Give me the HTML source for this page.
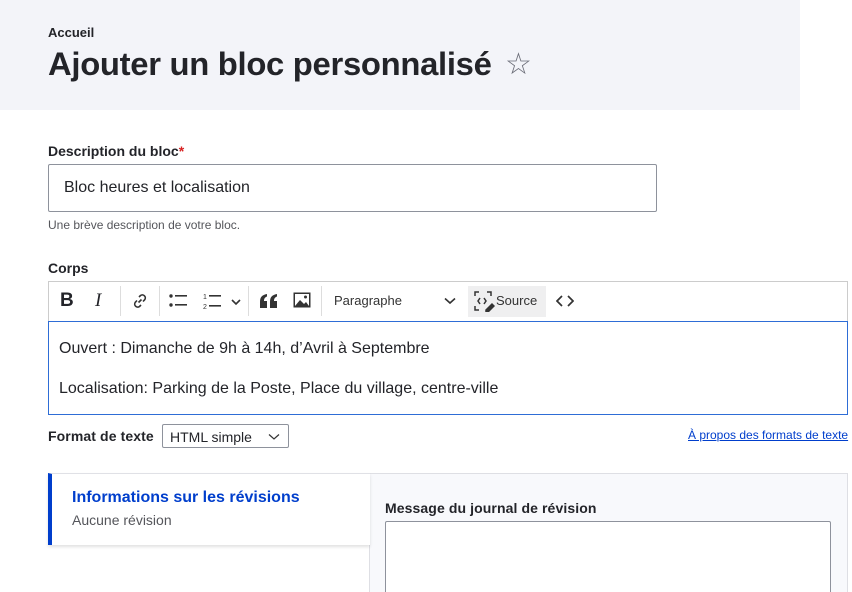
<!DOCTYPE html><html><head><meta charset="utf-8"><style>
*{box-sizing:border-box;margin:0;padding:0}
html,body{width:852px;height:592px;overflow:hidden}
body{background:#fff;font-family:"Liberation Sans",sans-serif;color:#232429;position:relative}
.a{position:absolute}
.hdr{left:0;top:0;width:800px;height:110px;background:#f3f4f9}
</style></head><body>
<div class="a hdr"></div>
<div class="a" style="left:48px;top:25px;font-size:13px;font-weight:bold">Accueil</div>
<div class="a" style="left:48px;top:45px;font-size:32.8px;font-weight:bold;letter-spacing:-0.3px">Ajouter un bloc personnalisé</div>
<div class="a" style="left:505px;top:47px;font-size:30px;color:#6b6d78">☆</div>
<div class="a" style="left:48px;top:143px;font-size:14px;font-weight:bold">Description du bloc<span style="color:#d72222">*</span></div>
<div class="a" style="left:48px;top:164px;width:609px;height:48px;border:1px solid #8e929c;border-radius:2px;padding:14px 15px;font-size:16px">Bloc heures et localisation</div>
<div class="a" style="left:48px;top:218px;font-size:12px;color:#55565b">Une brève description de votre bloc.</div>
<div class="a" style="left:48px;top:260px;font-size:14px;font-weight:bold">Corps</div>
<div class="a" style="left:48px;top:281px;width:800px;height:41px;border:1px solid #ccc;border-bottom:none;background:#fff"></div>
<div class="a" style="left:60px;top:290px;font-size:19px;font-weight:bold">B</div>
<div class="a" style="left:95px;top:290px;font-size:19px;font-style:italic;font-family:'Liberation Serif',serif">I</div>
<div class="a" style="left:120px;top:286px;width:1px;height:30px;background:#ddd"></div>
<svg class="a" style="left:131px;top:292px" width="18" height="18" viewBox="0 0 18 18" fill="none" stroke="#333" stroke-width="1.6"><path d="M7.5 10.5l3-3M8 5l1.5-1.5a3 3 0 014.2 4.2L12 9.5M10 13l-1.5 1.5a3 3 0 01-4.2-4.2L6 8.5"/></svg>
<div class="a" style="left:159px;top:286px;width:1px;height:30px;background:#ddd"></div>
<svg class="a" style="left:168px;top:292px" width="20" height="18" fill="#333"><circle cx="3" cy="4" r="1.7"/><circle cx="3" cy="13" r="1.7"/><rect x="7" y="3" width="12" height="1.6"/><rect x="7" y="12" width="12" height="1.6"/></svg>
<svg class="a" style="left:202px;top:292px" width="44" height="18" fill="#333"><text x="1" y="7" font-size="7" font-family="Liberation Sans">1</text><text x="1" y="17" font-size="7" font-family="Liberation Sans">2</text><rect x="7" y="3" width="12" height="1.6"/><rect x="7" y="13" width="12" height="1.6"/><path d="M30 8l4 4 4-4" stroke="#333" stroke-width="1.6" fill="none"/></svg>
<div class="a" style="left:248px;top:286px;width:1px;height:30px;background:#ddd"></div>
<svg class="a" style="left:260px;top:294px" width="17" height="14" fill="#333"><path d="M0 14V8C0 3 2 1 7 0v2.5C4.5 3.5 4 5 4 7h3v7zM10 14V8c0-5 2-7 7-8v2.5c-2.5 1-3 2.5-3 4.5h3v7z"/></svg>
<svg class="a" style="left:293px;top:292px" width="18" height="16"><rect x="0.5" y="0.5" width="17" height="15" fill="#333"/><rect x="2" y="2" width="14" height="12" fill="#fff"/><path d="M2 14l5-6 4 4 2-2 3 4z" fill="#333"/><circle cx="12.5" cy="5" r="1.5" fill="#333"/></svg>
<div class="a" style="left:321px;top:286px;width:1px;height:30px;background:#ddd"></div>
<div class="a" style="left:334px;top:293px;font-size:13px;color:#333">Paragraphe</div>
<svg class="a" style="left:444px;top:297px" width="12" height="8"><path d="M1 1.5l5 4.5 5-4.5" stroke="#333" stroke-width="1.6" fill="none"/></svg>
<div class="a" style="left:468px;top:286px;width:78px;height:31px;background:#efeff0"></div>
<svg class="a" style="left:473px;top:290px" width="22" height="22" fill="none" stroke="#333" stroke-width="1.5"><path d="M2 6V2h4M2 16v4h4M14 2h4v4"/><path d="M7 8l-2 3 2 3M11 8l2 3-2 3"/><path d="M13 20l6-6 2 2-6 6h-2z" fill="#333"/></svg>
<div class="a" style="left:496px;top:293px;font-size:13px;color:#333">Source</div>
<svg class="a" style="left:556px;top:294px" width="18" height="14" fill="none" stroke="#333" stroke-width="1.7"><path d="M6 2L1 7l5 5M12 2l5 5-5 5"/></svg>
<div class="a" style="left:48px;top:321px;width:800px;height:94px;border:1px solid #2e6dd6"></div>
<div class="a" style="left:59px;top:340px;font-size:16px;color:#232429">Ouvert : Dimanche de 9h à 14h, d’Avril à Septembre</div>
<div class="a" style="left:59px;top:380px;font-size:16px;color:#232429">Localisation: Parking de la Poste, Place du village, centre-ville</div>
<div class="a" style="left:48px;top:428px;font-size:14px;font-weight:bold;letter-spacing:0.1px">Format de texte</div>
<div class="a" style="left:162px;top:424px;width:127px;height:24px;border:1px solid #8e929c;border-radius:2px;padding:4px 7px;font-size:14px">HTML simple</div>
<svg class="a" style="left:268px;top:433px" width="12" height="8"><path d="M1 1.5l5 4.5 5-4.5" stroke="#333" stroke-width="1.2" fill="none"/></svg>
<div class="a" style="left:688px;top:428px;font-size:12px;color:#003ecc;text-decoration:underline">À propos des formats de texte</div>
<div class="a" style="left:369px;top:473px;width:479px;height:130px;background:#f8f9fc;border:1px solid #dedfe4"></div>
<div class="a" style="left:48px;top:473px;width:322px;height:72px;background:#fff;border-left:4px solid #003ecc;box-shadow:0 2px 3px rgba(0,0,0,.12);border-top:1px solid #e0e1e6"></div>
<div class="a" style="left:72px;top:489px;font-size:16px;font-weight:bold;color:#003ecc">Informations sur les révisions</div>
<div class="a" style="left:72px;top:512px;font-size:14px;color:#55565b">Aucune révision</div>
<div class="a" style="left:385px;top:500px;font-size:14px;font-weight:bold;letter-spacing:0.1px">Message du journal de révision</div>
<div class="a" style="left:385px;top:521px;width:446px;height:90px;background:#fff;border:1px solid #8e929c;border-radius:2px"></div>
</body></html>
